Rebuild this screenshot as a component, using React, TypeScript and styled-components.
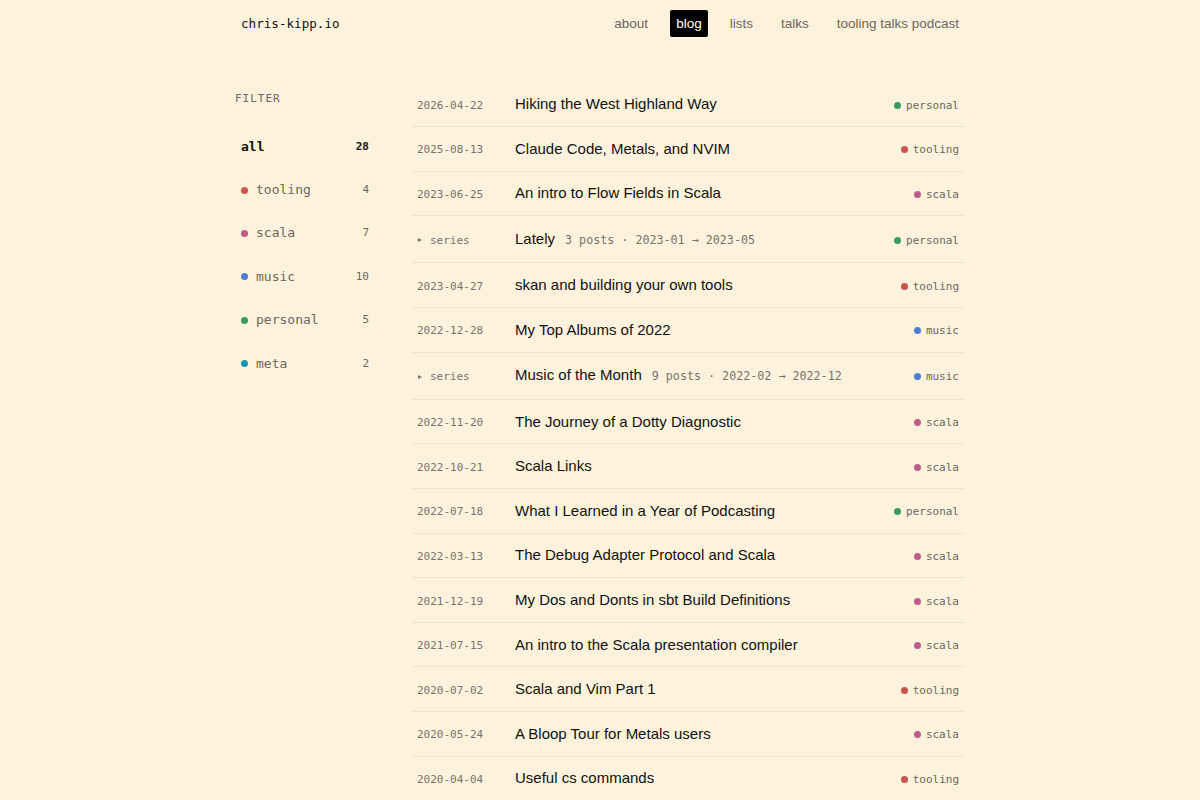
import React from "react";
import styled, { createGlobalStyle } from "styled-components";

const GlobalStyle = createGlobalStyle`
  html, body {
    margin: 0;
    padding: 0;
    background: #fdf3dc;
  }
  body {
    font-family: "Liberation Sans", Arial, sans-serif;
    color: #111;
  }
`;

const mono = `"DejaVu Sans Mono", "Liberation Mono", monospace`;

const tagColors: Record<string, string> = {
  tooling: "#c95550",
  scala: "#c25b8c",
  music: "#4b7fd6",
  personal: "#3a9b5c",
  meta: "#1997b0",
};

const Page = styled.div`
  width: 730px;
  margin: 0 auto;
`;

const Header = styled.header`
  display: flex;
  align-items: center;
  justify-content: space-between;
  padding: 10px 0;
`;

const Logo = styled.a`
  font-family: ${mono};
  font-size: 12.6px;
  color: #111;
  padding: 0 6px;
  text-decoration: none;
`;

const Nav = styled.nav`
  display: flex;
  gap: 16px;
`;

const NavLink = styled.a<{ $active?: boolean }>`
  font-size: 13.5px;
  line-height: 17px;
  padding: 5px 6px;
  border-radius: 2px;
  text-decoration: none;
  color: ${(p) => (p.$active ? "#fff" : "#6b6760")};
  background: ${(p) => (p.$active ? "#000" : "transparent")};
`;

const Main = styled.main`
  display: grid;
  grid-template-columns: 140px 1fr;
  column-gap: 37px;
  margin-top: 35.5px;
`;

const Sidebar = styled.aside`
  padding-top: 9.5px;
`;

const FilterLabel = styled.div`
  font-family: ${mono};
  font-size: 11px;
  line-height: 14px;
  letter-spacing: 1px;
  color: #6b6760;
  margin-bottom: 19px;
`;

const FilterItem = styled.div<{ $active?: boolean }>`
  display: flex;
  align-items: center;
  padding: 13.7px 6px;
  font-family: ${mono};
  font-size: 13px;
  line-height: 16px;
  color: ${(p) => (p.$active ? "#111" : "#6b6760")};
  font-weight: ${(p) => (p.$active ? 700 : 400)};
`;

const Dot = styled.span<{ $color: string }>`
  width: 7px;
  height: 7px;
  border-radius: 50%;
  background: ${(p) => p.$color};
  margin-right: 8px;
  flex-shrink: 0;
`;

const FilterName = styled.span`
  flex: 1;
`;

const Count = styled.span`
  font-size: 11px;
`;

const List = styled.div``;

const Row = styled.div<{ $series?: boolean }>`
  display: grid;
  grid-template-columns: 98px 1fr auto;
  align-items: center;
  padding: ${(p) => (p.$series ? "14.6px" : "13.8px")} 6px
    ${(p) => (p.$series ? "14.6px" : "13.8px")} 5px;
  border-bottom: 1px solid #efe4c6;
`;

const DateCell = styled.span`
  font-family: ${mono};
  font-size: 11px;
  color: #77736b;
  padding-top: 2px;
`;

const SeriesLabel = styled(DateCell)`
  display: flex;
  align-items: center;
  gap: 8px;
  &::before {
    content: "";
    border-left: 4px solid #77736b;
    border-top: 2.5px solid transparent;
    border-bottom: 2.5px solid transparent;
    margin-left: 1px;
  }
`;

const Title = styled.span`
  font-size: 15px;
  line-height: 16px;
  color: #111;
  display: flex;
  align-items: baseline;
  gap: 10px;
`;

const SeriesMeta = styled.span`
  font-family: ${mono};
  font-size: 11.7px;
  color: #77736b;
`;

const Tag = styled.span`
  display: flex;
  align-items: center;
  font-family: ${mono};
  font-size: 11px;
  color: #6b6760;
  padding-top: 2px;
`;

const TagDot = styled(Dot)`
  width: 7px;
  height: 7px;
  margin-right: 5px;
`;

type Entry =
  | { kind: "post"; date: string; title: string; tag: string }
  | { kind: "series"; title: string; meta: string; tag: string };

const entries: Entry[] = [
  { kind: "post", date: "2026-04-22", title: "Hiking the West Highland Way", tag: "personal" },
  { kind: "post", date: "2025-08-13", title: "Claude Code, Metals, and NVIM", tag: "tooling" },
  { kind: "post", date: "2023-06-25", title: "An intro to Flow Fields in Scala", tag: "scala" },
  { kind: "series", title: "Lately", meta: "3 posts · 2023-01 → 2023-05", tag: "personal" },
  { kind: "post", date: "2023-04-27", title: "skan and building your own tools", tag: "tooling" },
  { kind: "post", date: "2022-12-28", title: "My Top Albums of 2022", tag: "music" },
  { kind: "series", title: "Music of the Month", meta: "9 posts · 2022-02 → 2022-12", tag: "music" },
  { kind: "post", date: "2022-11-20", title: "The Journey of a Dotty Diagnostic", tag: "scala" },
  { kind: "post", date: "2022-10-21", title: "Scala Links", tag: "scala" },
  { kind: "post", date: "2022-07-18", title: "What I Learned in a Year of Podcasting", tag: "personal" },
  { kind: "post", date: "2022-03-13", title: "The Debug Adapter Protocol and Scala", tag: "scala" },
  { kind: "post", date: "2021-12-19", title: "My Dos and Donts in sbt Build Definitions", tag: "scala" },
  { kind: "post", date: "2021-07-15", title: "An intro to the Scala presentation compiler", tag: "scala" },
  { kind: "post", date: "2020-07-02", title: "Scala and Vim Part 1", tag: "tooling" },
  { kind: "post", date: "2020-05-24", title: "A Bloop Tour for Metals users", tag: "scala" },
  { kind: "post", date: "2020-04-04", title: "Useful cs commands", tag: "tooling" },
];

const filters = [
  { name: "tooling", count: 4 },
  { name: "scala", count: 7 },
  { name: "music", count: 10 },
  { name: "personal", count: 5 },
  { name: "meta", count: 2 },
];

export default function App() {
  return (
    <>
      <GlobalStyle />
      <Page>
        <Header>
          <Logo href="#">chris-kipp.io</Logo>
          <Nav>
            <NavLink href="#">about</NavLink>
            <NavLink href="#" $active>
              blog
            </NavLink>
            <NavLink href="#">lists</NavLink>
            <NavLink href="#">talks</NavLink>
            <NavLink href="#">tooling talks podcast</NavLink>
          </Nav>
        </Header>
        <Main>
          <Sidebar>
            <FilterLabel>FILTER</FilterLabel>
            <FilterItem $active>
              <FilterName>all</FilterName>
              <Count>28</Count>
            </FilterItem>
            {filters.map((f) => (
              <FilterItem key={f.name}>
                <Dot $color={tagColors[f.name]} />
                <FilterName>{f.name}</FilterName>
                <Count>{f.count}</Count>
              </FilterItem>
            ))}
          </Sidebar>
          <List>
            {entries.map((e, i) => (
              <Row key={i} $series={e.kind === "series"}>
                {e.kind === "series" ? (
                  <SeriesLabel>series</SeriesLabel>
                ) : (
                  <DateCell>{e.date}</DateCell>
                )}
                <Title>
                  {e.title}
                  {e.kind === "series" && <SeriesMeta>{e.meta}</SeriesMeta>}
                </Title>
                <Tag>
                  <TagDot $color={tagColors[e.tag]} />
                  {e.tag}
                </Tag>
              </Row>
            ))}
          </List>
        </Main>
      </Page>
    </>
  );
}
